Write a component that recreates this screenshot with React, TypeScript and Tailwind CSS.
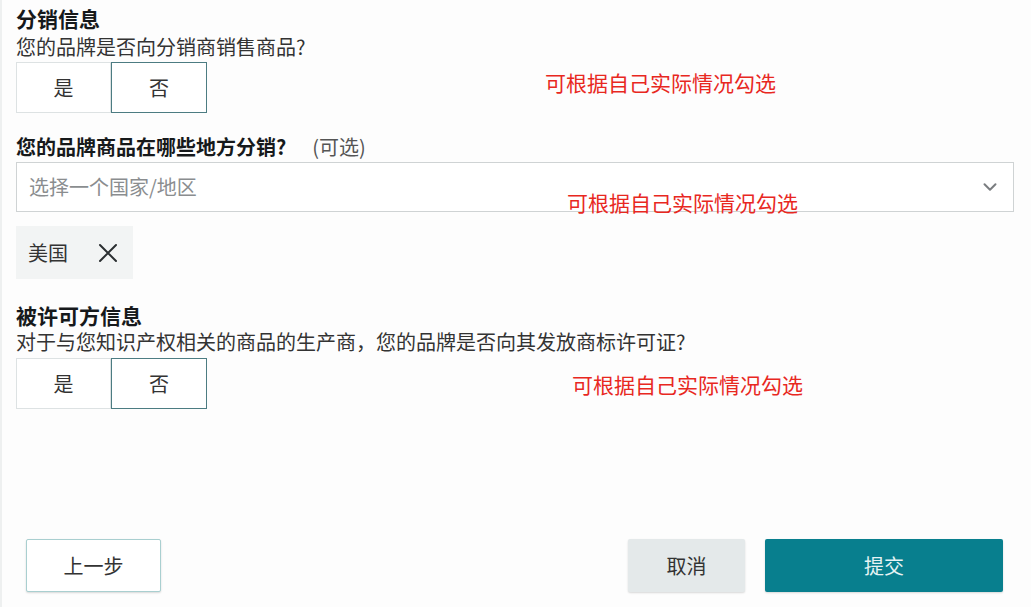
import { ChevronDown } from "lucide-react";

const font = { fontFamily: '"Noto Sans CJK SC", "Noto Sans", sans-serif' };

function YesNo() {
  return (
    <div className="flex h-[51px] w-[191px] text-[20px] text-[#333]">
      <button className="w-[95px] border border-[#dde2e3] bg-white">是</button>
      <button className="w-[96px] border border-[#4c7c82] bg-white">否</button>
    </div>
  );
}

function Note({ className }: { className: string }) {
  return (
    <span className={`absolute text-[21px] leading-[26px] text-[#e8281f] ${className}`}>
      可根据自己实际情况勾选
    </span>
  );
}

export default function App() {
  return (
    <div
      style={font}
      className="relative h-[607px] w-[1031px] overflow-hidden border-l-2 border-[#eef0f0] bg-[#fdfdfd] pl-[14px] pr-[16px]"
    >
      {/* 分销信息 */}
      <section className="pt-[7px]">
        <h2 className="text-[21px] font-bold leading-[22px] text-[#16191b]">分销信息</h2>
        <p className="mt-[6px] text-[20px] leading-[24px] text-[#333]">
          您的品牌是否向分销商销售商品?
        </p>
        <div className="mt-[3px]">
          <YesNo />
        </div>

        <div className="mt-[22px] flex items-baseline text-[20px] leading-[24px]">
          <span className="font-bold text-[#16191b]">您的品牌商品在哪些地方分销?</span>
          <span className="ml-[26px] text-[#555]">(可选)</span>
        </div>
        <div className="mt-[3px] flex h-[50px] w-[998px] items-center justify-between border border-[#cfd3d4] bg-white pl-[12px] pr-[12px]">
          <span className="text-[20px] text-[#8a8d8f]">选择一个国家/地区</span>
          <ChevronDown className="h-[22px] w-[22px] text-[#7a7d80]" strokeWidth={2.2} />
        </div>
        <div className="mt-[14px] flex h-[53px] w-[117px] items-center gap-[30px] bg-[#f2f4f4] pl-[12px]">
          <span className="text-[20px] text-[#333]">美国</span>
          <svg width="20" height="20" viewBox="0 0 20 20">
            <path d="M2 2 L18 18 M18 2 L2 18" stroke="#2b2f31" strokeWidth="2" strokeLinecap="round" />
          </svg>
        </div>
      </section>

      {/* 被许可方信息 */}
      <section className="mt-[25px]">
        <h2 className="text-[21px] font-bold leading-[22px] text-[#16191b]">被许可方信息</h2>
        <p className="mt-[4px] text-[20px] leading-[24px] text-[#333]">
          对于与您知识产权相关的商品的生产商，您的品牌是否向其发放商标许可证?
        </p>
        <div className="mt-[4px]">
          <YesNo />
        </div>
      </section>

      {/* footer */}
      <div className="mt-[130px] flex items-center justify-between pl-[10px] pr-[12px]">
        <button className="h-[53px] w-[135px] rounded-[2px] border border-[#a9cfd0] bg-white text-[20px] text-[#333] shadow-[0_1px_2px_rgba(0,0,0,0.15)]">
          上一步
        </button>
        <div className="flex gap-[20px]">
          <button className="h-[53px] w-[117px] rounded-[2px] bg-[#e4e9ea] text-[20px] text-[#333] shadow-[0_1px_2px_rgba(0,0,0,0.15)]">
            取消
          </button>
          <button className="h-[53px] w-[238px] rounded-[2px] bg-[#087f8e] text-[20px] text-[#e6f3f4] shadow-[0_1px_2px_rgba(0,0,0,0.15)]">
            提交
          </button>
        </div>
      </div>

      <Note className="left-[543px] top-[69px]" />
      <Note className="left-[565px] top-[189px]" />
      <Note className="left-[570px] top-[371px]" />
    </div>
  );
}
